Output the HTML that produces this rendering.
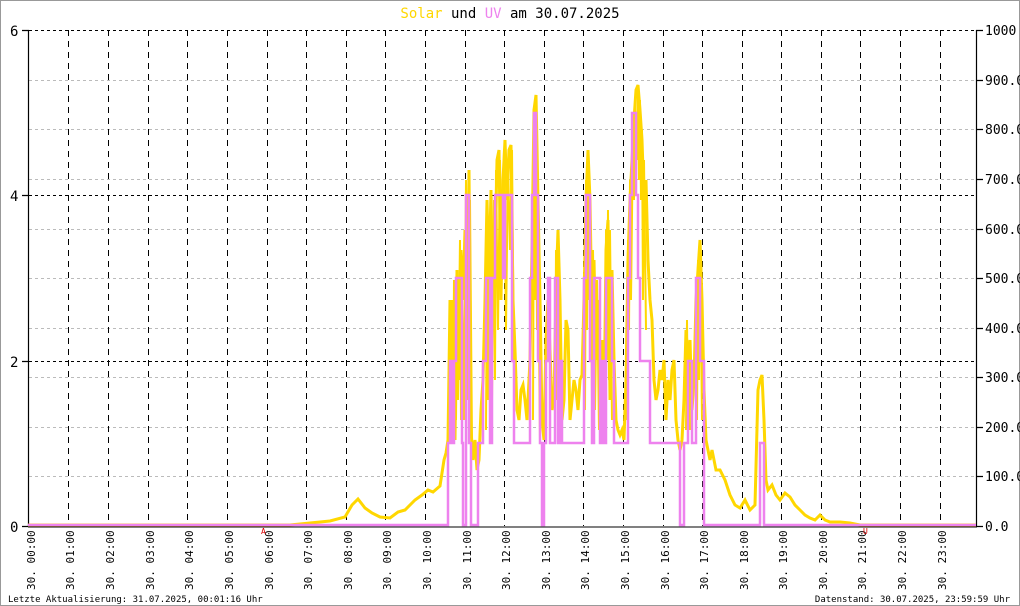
<!DOCTYPE html>
<html><head><meta charset="utf-8"><style>
html,body{margin:0;padding:0;background:#fff}
svg{display:block}
text{font-family:"DejaVu Sans Mono","Liberation Mono",monospace}
</style></head><body>
<svg width="1020" height="606" viewBox="0 0 1020 606" xmlns="http://www.w3.org/2000/svg">
<rect x="0.5" y="0.5" width="1019" height="605" fill="#fff" stroke="#999"/>
<text x="510" y="18" font-size="14" text-anchor="middle" fill="#000"><tspan fill="#ffd700">Solar</tspan> und <tspan fill="#ee82ee">UV</tspan> am 30.07.2025</text>
<g stroke="#bbb" stroke-dasharray="3,3" stroke-width="1">
<path d="M29 80.5H976M29 129.5H976M29 179.5H976M29 229.5H976M29 278.5H976M29 328.5H976M29 377.5H976M29 427.5H976M29 476.5H976"/>
</g>
<g stroke="#000" stroke-dasharray="3,3" stroke-width="1">
<path d="M29 30.5H976M29 195.5H976M29 361.5H976"/>
</g>
<g stroke="#000" stroke-dasharray="6,5" stroke-width="1">
<path d="M68.5 30V526M108.5 30V526M148.5 30V526M187.5 30V526M227.5 30V526M267.5 30V526M306.5 30V526M346.5 30V526M385.5 30V526M425.5 30V526M465.5 30V526M504.5 30V526M544.5 30V526M583.5 30V526M623.5 30V526M663.5 30V526M702.5 30V526M742.5 30V526M781.5 30V526M821.5 30V526M860.5 30V526M900.5 30V526M940.5 30V526"/>
</g>
<path d="M28.5 30V527M976.5 30V527M22 30.5H29M22 195.5H29M22 361.5H29M22 526.5H29M976 30.5H983M976 80.5H983M976 129.5H983M976 179.5H983M976 229.5H983M976 278.5H983M976 328.5H983M976 377.5H983M976 427.5H983M976 476.5H983M976 526.5H983" stroke="#000" stroke-width="1.2" fill="none"/>
<path d="M28 527H977" stroke="#000" stroke-width="1"/>
<g font-size="14" fill="#000"><text x="10" y="36">6</text><text x="10" y="201">4</text><text x="10" y="367">2</text><text x="10" y="532">0</text></g>
<g font-size="13" fill="#000">
<text x="985" y="35">1000</text><text x="985" y="85">900.0</text><text x="985" y="134">800.0</text><text x="985" y="184">700.0</text><text x="985" y="234">600.0</text><text x="985" y="283">500.0</text><text x="985" y="333">400.0</text><text x="985" y="382">300.0</text><text x="985" y="432">200.0</text><text x="985" y="481">100.0</text><text x="985" y="531">0.0</text>
</g>
<g fill="none" stroke="#ffd700" stroke-width="3" stroke-linejoin="miter">
<polyline points="28,525 290,525 310,523 330,521 345,517 352,505 358,499 365,508 372,513 380,517 390,518 398,512 405,510 415,500 422,495 428,490 433,492 440,486 444,460 446,453 448,440 450,300 451,400 453,330 455,440 457,270 459,380 461,250 463,300 465,230 467,400 469,170 471,430 473,460 475,440 477,470 479,460 481,410 483,380 485,300 487,200 489,280 491,190 493,330 495,260 497,160 499,150 501,300 503,180 505,140 507,200 509,150 511,145 513,300 515,350 517,410 519,420 521,390 523,385 525,400 527,420 530,360 532,250 534,110 536,95 538,200 540,300 542,420 544,440 546,340 548,300 550,350 552,410 554,400 556,290 558,230 560,300 562,420 564,400 566,320 568,330 570,420 572,400 574,380 576,390 578,410 580,380 582,375 584,300 586,200 588,150 590,200 592,320 594,260 596,360 598,300 600,400 602,340 604,420 606,250 608,220 610,400 612,270 614,360 616,420 618,430 620,435 622,430 624,440 626,380 628,260 630,200 632,160 634,120 636,90 638,85 640,110 642,140 644,200 646,180 648,260 650,300 652,320 654,380 656,400 658,390 660,370 662,380 664,360 666,420 668,380 670,400 672,370 674,360 676,420 678,440 680,450 682,440 684,400 686,330 688,360 690,340 692,410 694,380 696,300 698,270 700,240 702,300 704,390 706,440 708,450 710,460 712,450 714,460 716,470 720,470 725,480 730,495 735,505 740,508 745,500 750,510 755,505 758,390 760,380 762,375 764,420 766,480 768,490 772,485 776,495 780,500 785,493 790,497 795,505 800,510 805,515 810,518 815,520 820,515 825,520 830,522 840,522 850,523 860,525 976,525"/>
<path stroke-width="2" d="M449,440 L450,330 451,420 452,300 453,430 454,280 456,420 457,300 458,400 460,240 461,420 462,260 464,420 466,180 468,300 470,200 472,440 M486,430 L487,250 488,400 489,220 490,420 491,210 492,400 494,200 495,380 496,170 498,330 500,160 502,280 504,150 506,330 508,160 510,250 512,150 514,380 M533,420 L534,120 535,300 536,100 537,330 538,250 540,440 M555,420 L556,250 557,400 558,240 559,410 M585,410 L586,180 587,330 588,170 589,300 590,190 592,400 593,250 595,410 597,280 599,430 M605,430 L606,230 607,360 608,210 609,380 610,230 612,420 M627,420 L628,240 629,330 630,180 631,300 633,130 634,200 635,100 637,160 638,90 639,180 640,100 641,200 642,130 643,300 644,160 646,330 M686,430 L687,320 688,420 689,350 690,430 M697,420 L698,260 699,380 700,245 701,330 702,420"/>
</g>
<path fill="none" stroke="#ee82ee" stroke-width="2.5" d="M28 525H448V443H450V361H452V443H454V361H456V278H462V443H463V525H466V195H469V443H471V525H478V443H483V361H486V278H490V443H492V278H495V195H503V278H505V195H512V361H514V443H530V278H532V195H534V113H536V195H538V361H540V443H542V525H544V443H546V361H548V278H550V443H555V278H558V443H560V361H562V443H584V278H586V195H590V361H592V443H594V278H600V443H602V361H604V443H606V278H612V361H614V443H628V278H630V195H632V113H636V195H638V278H640V361H650V443H680V525H684V443H688V361H692V443H696V278H700V361H704V525H760V443H764V525H976"/>
<g font-size="11" fill="#000">
<text transform="translate(35,590) rotate(-90)">30. 00:00</text>
<text transform="translate(74,590) rotate(-90)">30. 01:00</text>
<text transform="translate(114,590) rotate(-90)">30. 02:00</text>
<text transform="translate(154,590) rotate(-90)">30. 03:00</text>
<text transform="translate(193,590) rotate(-90)">30. 04:00</text>
<text transform="translate(233,590) rotate(-90)">30. 05:00</text>
<text transform="translate(273,590) rotate(-90)">30. 06:00</text>
<text transform="translate(312,590) rotate(-90)">30. 07:00</text>
<text transform="translate(352,590) rotate(-90)">30. 08:00</text>
<text transform="translate(391,590) rotate(-90)">30. 09:00</text>
<text transform="translate(431,590) rotate(-90)">30. 10:00</text>
<text transform="translate(471,590) rotate(-90)">30. 11:00</text>
<text transform="translate(510,590) rotate(-90)">30. 12:00</text>
<text transform="translate(550,590) rotate(-90)">30. 13:00</text>
<text transform="translate(589,590) rotate(-90)">30. 14:00</text>
<text transform="translate(629,590) rotate(-90)">30. 15:00</text>
<text transform="translate(669,590) rotate(-90)">30. 16:00</text>
<text transform="translate(708,590) rotate(-90)">30. 17:00</text>
<text transform="translate(748,590) rotate(-90)">30. 18:00</text>
<text transform="translate(787,590) rotate(-90)">30. 19:00</text>
<text transform="translate(827,590) rotate(-90)">30. 20:00</text>
<text transform="translate(866,590) rotate(-90)">30. 21:00</text>
<text transform="translate(906,590) rotate(-90)">30. 22:00</text>
<text transform="translate(946,590) rotate(-90)">30. 23:00</text>
</g>
<text x="261" y="534" font-size="8" fill="#d00">A</text>
<text x="863" y="534" font-size="8" fill="#d00">U</text>
<text x="8" y="602" font-size="9" fill="#000">Letzte Aktualisierung: 31.07.2025, 00:01:16 Uhr</text>
<text x="1010" y="602" font-size="9" fill="#000" text-anchor="end">Datenstand: 30.07.2025, 23:59:59 Uhr</text>
</svg>
</body></html>
